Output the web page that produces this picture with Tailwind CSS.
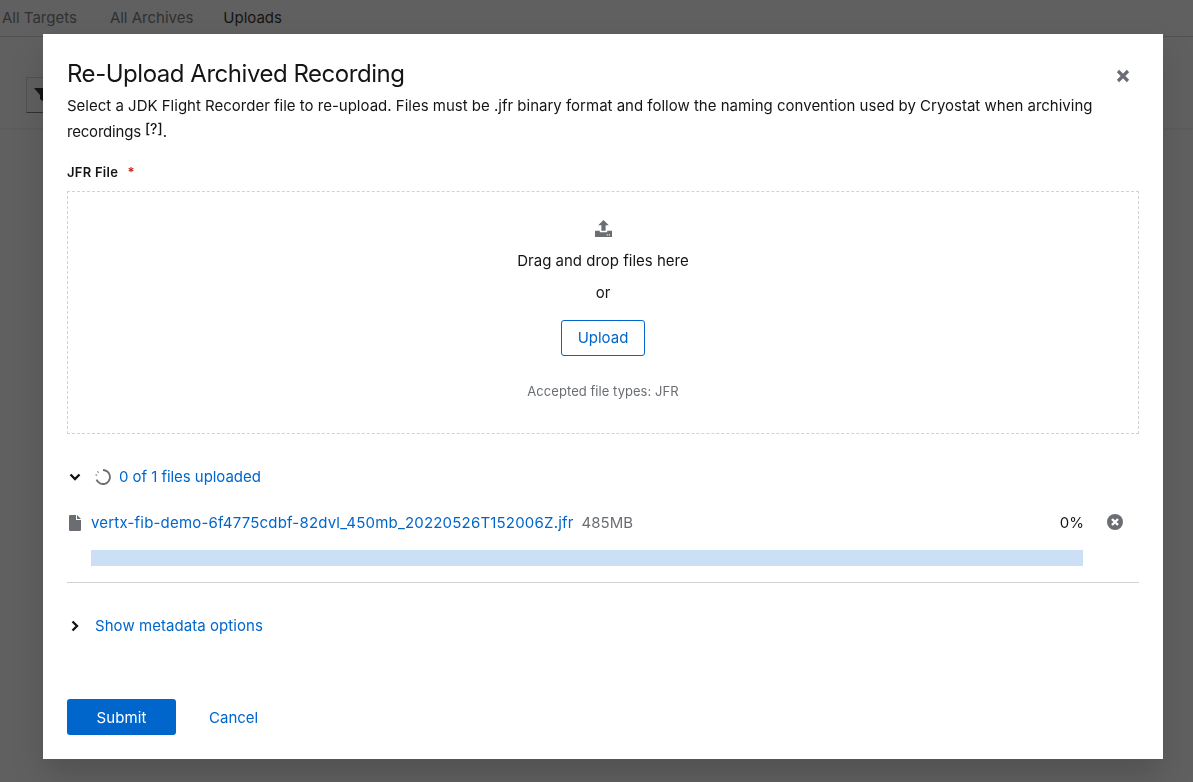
<!DOCTYPE html>
<html lang="en">
<head>
    <meta charset="UTF-8">
    <title>Re-Upload Archived Recording</title>
    <script src="https://cdn.jsdelivr.net/npm/@tailwindcss/browser@4"></script>
</head>
<body class="h-[782px] overflow-hidden bg-white font-['Inter',sans-serif] text-[#151515]">
    <!-- Page behind the modal -->
    <div class="flex h-[37px] items-center border-b border-[#d2d2d2] pl-[2px] text-[15px] text-[#6a6e73]">
        <span>All Targets</span>
        <span class="ml-[33px]">All Archives</span>
        <span class="ml-[30px] text-[#151515]">Uploads</span>
    </div>
    <div class="h-[91px] px-[26px] pt-[40px] shadow-[0_1px_2px_rgba(0,0,0,0.08)]">
        <div class="flex h-[36px] w-[60px] items-center border border-[#d2d2d2] border-b-[#6a6e73] pl-[7px]">
            <svg class="h-[16px] w-[16px]" viewBox="0 0 16 16" fill="#151515"><path d="M0 1h16l-6 7v7l-4-3V8z"/></svg>
        </div>
    </div>

    <!-- Backdrop -->
    <div class="fixed inset-0 bg-[#151515]/68"></div>

    <!-- Modal -->
    <div class="fixed left-[43px] top-[34px] flex h-[725px] w-[1120px] flex-col bg-white px-[24px] pt-[24px] shadow-[0_16px_32px_rgba(3,3,3,0.16)]">
        <button class="absolute right-[32px] top-[34px] text-[#6a6e73]">
            <svg class="h-[16px] w-[16px]" viewBox="0 0 16 16" fill="none" stroke="#6a6e73" stroke-width="3.2"><path d="M3 3l10 10M13 3L3 13"/></svg>
        </button>
        <h1 class="pt-[1px] text-[24px] leading-[30px] tracking-[-0.47px]">Re-Upload Archived Recording</h1>
        <p class="mt-[4px] w-[1040px] text-[15px] leading-[26px]">Select a JDK Flight Recorder file to re-upload. Files must be .jfr binary format and follow the naming convention used by Cryostat when archiving <span class="tracking-[-0.2px]">recordings</span><span class="ml-[4px] inline-block align-[3px] text-[14px] font-medium leading-none">[?]</span>.</p>

        <div class="mt-[17px] text-[13px] font-semibold leading-[20px] tracking-[0.25px]">JFR File <span class="ml-[6px] text-[#c9190b]">*</span></div>

        <div class="mt-[9px] flex h-[243px] flex-col items-center border border-dashed border-[#d2d2d2] pt-[28px]">
            <svg class="h-[17px] w-[17px]" viewBox="0 0 16 16" fill="#6a6e73"><path d="M8 0l5 5H10v5H6V5H3zM0 10h4.500v1.500h7V10H16v6H0z"/><path d="M11 13.500h1v1h-1zM13 13.500h1v1h-1z" fill="#fff"/></svg>
            <div class="mt-[13px] text-[15px] leading-[22px]">Drag and drop files here</div>
            <div class="mt-[10px] text-[15px] leading-[22px]">or</div>
            <button class="mt-[16px] h-[36px] w-[84px] rounded-[3px] border border-[#0066cc] pt-[1px] text-[15px] text-[#0066cc]">Upload</button>
            <div class="mt-[25px] text-[13px] leading-[20px] tracking-[0.05px] text-[#6a6e73]">Accepted file types: JFR</div>
        </div>

        <div class="mt-[32px] flex h-[22px] items-center">
            <svg class="ml-[2px] h-[12px] w-[12px]" viewBox="0 0 12 12" fill="none" stroke="#151515" stroke-width="2.400"><path d="M1.500 3.500L6 8l4.500-4.500"/></svg>
            <svg class="ml-[13px] h-[18px] w-[18px]" viewBox="0 0 18 18" fill="none" stroke="#6a6e73" stroke-width="1.800"><path d="M9 2a7 7 0 1 1-6.500 9.600"/><path d="M2.200 7.500l.3-1M3.800 4.300l.6-.6"/></svg>
            <span class="ml-[7px] text-[15px] tracking-[-0.05px] text-[#0066cc]">0 of 1 files uploaded</span>
        </div>

        <div class="mt-[24px] flex h-[22px] items-center">
            <svg class="ml-[2px] h-[16px] w-[12px]" viewBox="0 0 12 16" fill="#6a6e73"><path d="M1 0h6v5h5v10a1 1 0 0 1-1 1H1a1 1 0 0 1-1-1V1a1 1 0 0 1 1-1zM8 0l4 4H8z"/></svg>
            <span class="ml-[10px] text-[15px] tracking-[0.19px] text-[#0066cc]">vertx-fib-demo-6f4775cdbf-82dvl_450mb_20220526T152006Z.jfr</span>
            <span class="ml-[8px] text-[15px] text-[#6a6e73]">485MB</span>
            <span class="ml-auto mr-[55px] text-[15px]">0%</span>
        </div>
        <svg class="absolute left-[1064px] top-[480px] h-[16px] w-[16px]" viewBox="0 0 16 16"><circle cx="8" cy="8" r="8" fill="#6a6e73"/><path d="M5 5l6 6M11 5l-6 6" stroke="#fff" stroke-width="2.400"/></svg>

        <div class="ml-[24px] mr-[56px] mt-[16px] h-[16px] bg-[#cce0f5]"></div>
        <div class="mt-[16px] h-px bg-[#d2d2d2]"></div>

        <div class="mt-[32px] flex h-[22px] items-center">
            <svg class="ml-[2px] h-[12px] w-[12px]" viewBox="0 0 12 12" fill="none" stroke="#151515" stroke-width="2.400"><path d="M3.500 1.500L8 6l-4.500 4.500"/></svg>
            <span class="ml-[14px] text-[15px] tracking-[0.06px] text-[#0066cc]">Show metadata options</span>
        </div>

        <div class="mt-[62px] flex items-center">
            <button class="h-[36px] w-[109px] rounded-[3px] bg-[#0066cc] pt-[2px] text-[15px] tracking-[0.1px] text-white">Submit</button>
            <button class="ml-[33px] pt-[2px] text-[15px] text-[#0066cc]">Cancel</button>
        </div>
    </div>
</body>
</html>
